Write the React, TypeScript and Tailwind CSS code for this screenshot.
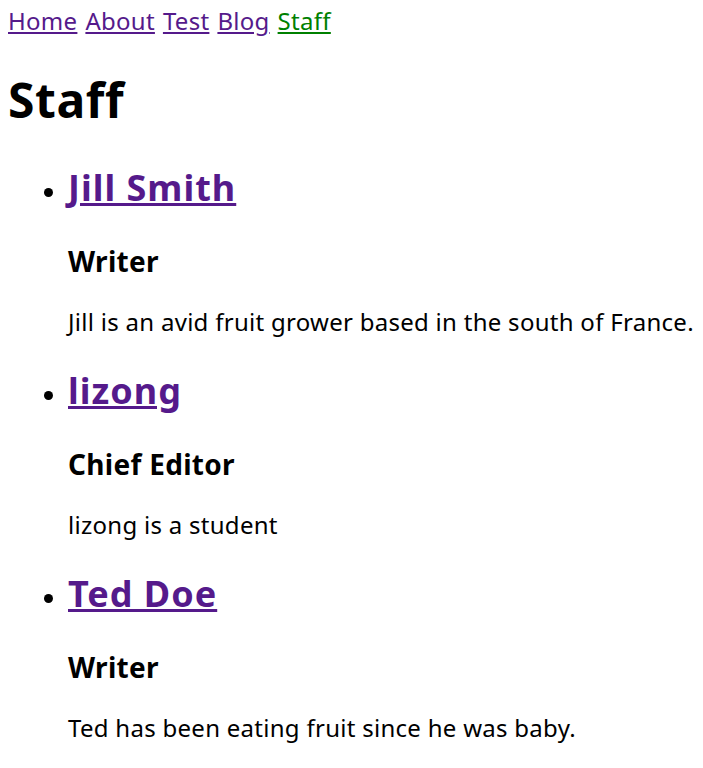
import React from "react";

const staff = [
  { name: "Jill Smith", role: "Writer", bio: "Jill is an avid fruit grower based in the south of France." },
  { name: "lizong", role: "Chief Editor", bio: "lizong is a student" },
  { name: "Ted Doe", role: "Writer", bio: "Ted has been eating fruit since he was baby." },
];

export default function App() {
  return (
    <div className="bg-white text-black p-[8px] text-[24px] leading-[32px] tracking-[0.28px] font-['Noto_Sans',sans-serif] min-h-[768px]">
      <nav className="flex gap-[8px] leading-[26px]">
        <a href="#" className="underline text-[#551a8b]">Home</a>
        <a href="#" className="underline text-[#551a8b]">About</a>
        <a href="#" className="underline text-[#551a8b]">Test</a>
        <a href="#" className="underline text-[#551a8b]">Blog</a>
        <a href="#" className="underline text-[#008000]">Staff</a>
      </nav>
      <h1 className="text-[48px] leading-[64px] font-bold mt-[34px] tracking-[0.6px]">Staff</h1>
      <ul className="list-disc pl-[60px] mt-[32px]">
        {staff.map((s) => (
          <li key={s.name} className="mb-[29px]">
            <h2 className="text-[36px] leading-[48px] font-bold tracking-[1px]">
              <a href="#" className="underline text-[#551a8b]">{s.name}</a>
            </h2>
            <h3 className="text-[28px] leading-[37px] font-bold mt-[31px] tracking-[0.3px]">{s.role}</h3>
            <p className="mt-[26px]">{s.bio}</p>
          </li>
        ))}
      </ul>
    </div>
  );
}
